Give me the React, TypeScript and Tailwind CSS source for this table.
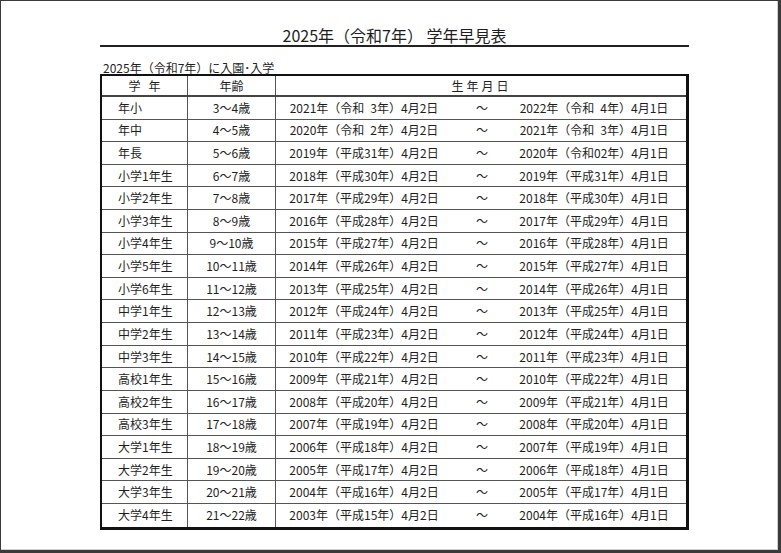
import React from "react";

const S = "\u2002";
const rows: [string, string, string, string][] = [
  ["年小", "3～4歳", `2021年（令和${S}3年）4月2日`, `2022年（令和${S}4年）4月1日`],
  ["年中", "4～5歳", `2020年（令和${S}2年）4月2日`, `2021年（令和${S}3年）4月1日`],
  ["年長", "5～6歳", "2019年（平成31年）4月2日", "2020年（令和02年）4月1日"],
  ["小学1年生", "6～7歳", "2018年（平成30年）4月2日", "2019年（平成31年）4月1日"],
  ["小学2年生", "7～8歳", "2017年（平成29年）4月2日", "2018年（平成30年）4月1日"],
  ["小学3年生", "8～9歳", "2016年（平成28年）4月2日", "2017年（平成29年）4月1日"],
  ["小学4年生", "9～10歳", "2015年（平成27年）4月2日", "2016年（平成28年）4月1日"],
  ["小学5年生", "10～11歳", "2014年（平成26年）4月2日", "2015年（平成27年）4月1日"],
  ["小学6年生", "11～12歳", "2013年（平成25年）4月2日", "2014年（平成26年）4月1日"],
  ["中学1年生", "12～13歳", "2012年（平成24年）4月2日", "2013年（平成25年）4月1日"],
  ["中学2年生", "13～14歳", "2011年（平成23年）4月2日", "2012年（平成24年）4月1日"],
  ["中学3年生", "14～15歳", "2010年（平成22年）4月2日", "2011年（平成23年）4月1日"],
  ["高校1年生", "15～16歳", "2009年（平成21年）4月2日", "2010年（平成22年）4月1日"],
  ["高校2年生", "16～17歳", "2008年（平成20年）4月2日", "2009年（平成21年）4月1日"],
  ["高校3年生", "17～18歳", "2007年（平成19年）4月2日", "2008年（平成20年）4月1日"],
  ["大学1年生", "18～19歳", "2006年（平成18年）4月2日", "2007年（平成19年）4月1日"],
  ["大学2年生", "19～20歳", "2005年（平成17年）4月2日", "2006年（平成18年）4月1日"],
  ["大学3年生", "20～21歳", "2004年（平成16年）4月2日", "2005年（平成17年）4月1日"],
  ["大学4年生", "21～22歳", "2003年（平成15年）4月2日", "2004年（平成16年）4月1日"],
];

export default function App() {
  return (
    <div
      className="w-[781px] h-[553px] bg-[#3a3a3a] pt-px pl-px pr-[3px] pb-[3px] text-[#1e1e1e]"
      style={{ fontFamily: '"Noto Sans CJK JP", "Noto Sans", sans-serif' }}
    >
      <div className="h-full bg-white border-r border-b border-[#d0d0d0] pl-[99px]">
        <div className="w-[589px]">
          <div className="pt-[24px] h-[46px] text-center text-[16px] leading-[20px] border-b-2 border-[#222]">
            2025年（令和7年） 学年早見表
          </div>
          <div className="mt-[14px] pl-[3px] text-[12px] leading-[13px] whitespace-nowrap">
            2025年（令和7年）に入園･入学
          </div>
          <div className="border-t-2 border-l-2 border-r-[3px] border-b-[3px] border-[#111] text-[12px]">
            <div className="grid grid-cols-[86px_88px_1fr] h-[21px] border-b-2 border-[#444] leading-[19px]">
              <div className="flex justify-center gap-[8px] border-r border-[#555]">
                <span>学</span>
                <span>年</span>
              </div>
              <div className="text-center border-r border-[#555]">年齢</div>
              <div className="flex justify-center gap-[3px] pr-[2px]">
                <span>生</span>
                <span>年</span>
                <span>月</span>
                <span>日</span>
              </div>
            </div>
            {rows.map((r, i) => (
              <div
                key={i}
                className={
                  "grid grid-cols-[86px_88px_176px_60px_164px_1fr] h-[22.62px] items-center whitespace-nowrap " +
                  (i < rows.length - 1 ? "border-b border-[#555]" : "")
                }
              >
                <div className="h-full flex items-center pl-[16px] border-r border-[#555]">{r[0]}</div>
                <div className="h-full flex items-center justify-center border-r border-[#555]">{r[1]}</div>
                <div className="text-center">{r[2]}</div>
                <div className="text-center">～</div>
                <div className="text-center">{r[3]}</div>
                <div />
              </div>
            ))}
          </div>
        </div>
      </div>
    </div>
  );
}
